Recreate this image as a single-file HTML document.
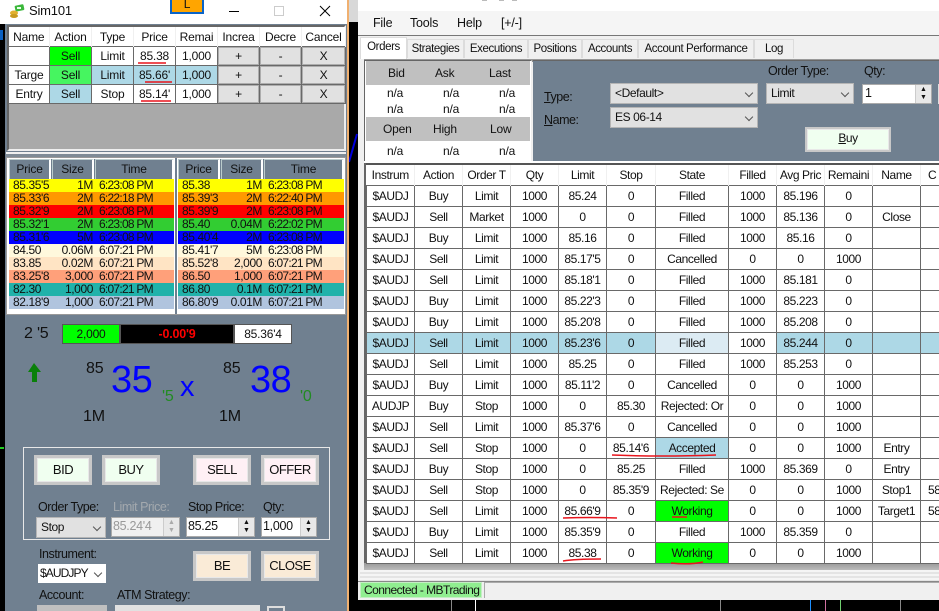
<!DOCTYPE html>
<html><head><meta charset="utf-8"><title>Sim101</title>
<style>
html,body{margin:0;padding:0;background:#000;}
#p{position:relative;width:939px;height:611px;overflow:hidden;background:#000;font:12px "Liberation Sans",sans-serif;color:#111;letter-spacing:-.2px;}
#p div{position:absolute;box-sizing:border-box;white-space:nowrap;}
table{position:absolute;border-collapse:collapse;table-layout:fixed;font:12px "Liberation Sans",sans-serif;letter-spacing:-.2px;color:#111;}
td{padding:0;text-align:center;overflow:hidden;white-space:nowrap;}
#top td{border:1px solid #696969;height:18px;background:#fff;}
#top tr:first-child td{border:0;border-right:1px solid #f0f0f0;height:19px;}
#top .b{background:#e1e1e1;box-shadow:inset 0 0 0 1px #adadad;border:1px solid #696969;}
.lb{background:#add8e6!important;}
.d{table-layout:fixed;}
.d td{height:13px;line-height:13px;font-size:12px;}
.d td:nth-child(1){text-align:left;padding-left:4px;letter-spacing:-.4px;}
.d td:nth-child(2){text-align:right;letter-spacing:-.4px;}
.d td:nth-child(3){text-align:left;padding-left:6px;letter-spacing:-.75px;}
.y td{background:#ff0;}.o td{background:#ff9900;}.r td{background:#f00;}.g td{background:#32cd32;}.u td{background:#00f;}
.c td{background:#fff8dc;}.q td{background:#ffe4c4;}.s td{background:#ffa07a;}.t td{background:#20b2aa;}.v td{background:#b0c4de;}
.h{background:#708090;border-top:1px solid #bcc;border-left:1px solid #bcc;border-right:2px solid #fff;text-align:center;line-height:18px;}
.btn{border:3px solid #c8c8c8;outline:0;text-align:center;line-height:24px;font-size:13px;letter-spacing:-.5px;box-shadow:inset 0 0 0 1px #e8e8e8;}
.gr{background:#f0fff0;}.pk{background:#fff0f5;}.an{background:#faebd7;}
.lab{font-size:12.5px;line-height:14px;letter-spacing:-.45px;}
.sel{background:#e1e1e1;border:1px solid #b5b5b5;line-height:19px;padding-left:4px;letter-spacing:-.4px;}
.inp{background:#fff;border:1px solid #aaa;line-height:17px;padding-left:1px;font-size:12.5px;letter-spacing:-.3px;}
.spin{right:0;top:0;bottom:0;width:16px;background:#e8e8e8;border-left:1px solid #ccc;font-size:7px;line-height:8px;text-align:center;letter-spacing:0;padding-top:1px;white-space:normal!important;}
.chev{right:5px;top:6px;width:6px;height:6px;border-right:1px solid #555;border-bottom:1px solid #555;transform:rotate(45deg) scale(1,1);}
.tab{top:39px;height:19px;background:#f0f0f0;border:1px solid #dcdcdc;border-bottom:0;line-height:18px;text-align:center;font-size:11.5px;letter-spacing:-.4px;}
#ord{letter-spacing:-.4px;}
#ord td{border:1px solid #696969;height:20px;background:#fff;}
#ord tr:first-child td{border:0;border-right:1px solid #f0f0f0;height:20px;}
#ord td:last-child{text-align:left;padding-left:7px;}
.w{background:#0f0!important;}
.big{color:#00f;font-size:38px;line-height:40px;letter-spacing:-.5px;}
.sm{font-size:16px;line-height:18px;}
.gn{color:#228b22;font-size:16px;line-height:18px;}
</style></head><body>
<div id="p">
<!-- chart bits -->
<div style="left:0;top:0;width:6px;height:24px;background:#fff"></div>
<div style="left:0;top:30px;width:3px;height:10px;background:#0a5fc0"></div>
<div style="left:347px;top:0;width:2px;height:611px;background:#f0b070"></div>
<div style="left:349px;top:0;width:9px;height:22px;background:#d8d8d8"></div>
<div style="left:0;top:447px;width:4px;height:2px;background:#2c2"></div>
<svg style="position:absolute;left:349px;top:120px" width="10" height="50"><path d="M0 42L8 14" stroke="#00d" stroke-width="2" fill="none"/></svg>

<!-- left window -->
<div style="left:5px;top:0;width:342px;height:611px;background:#708090"></div>
<div style="left:5px;top:0;width:342px;height:24px;background:#fff"></div>
<svg style="position:absolute;left:9px;top:4px" width="16" height="14"><rect x="6" y="1" width="9" height="6" rx="1" fill="#3cb83c" transform="rotate(-12 10 4)"/><rect x="8" y="3" width="4" height="2" fill="#e8ffe8"/><ellipse cx="5" cy="9" rx="4" ry="2.5" fill="#e0b030"/><ellipse cx="5" cy="12" rx="4" ry="2" fill="#c89a20"/></svg>
<div style="left:29px;top:3px;font-size:13px;line-height:16px">Sim101</div>
<div style="left:170px;top:0;width:34px;height:14px;background:#ffa500;border:2px solid #0a64c8;border-top:0;text-align:center;line-height:8px;font-size:12px">L</div>
<div style="left:229px;top:11px;width:10px;height:1px;background:#000"></div>
<div style="left:274px;top:6px;width:10px;height:10px;border:1px solid #ccc"></div>
<svg style="position:absolute;left:319px;top:5px" width="12" height="12"><path d="M1 1L11 11M11 1L1 11" stroke="#000" stroke-width="1" fill="none"/></svg>

<!-- top grid -->
<div style="left:7px;top:25px;width:339px;height:126px;background:#a9a9a9;border:2px solid #666;border-bottom:2px solid #eee;border-right:2px solid #eee"></div>
<table id="top" style="left:8px;top:27px;width:337px">
<colgroup><col style="width:41px"><col style="width:42px"><col style="width:42px"><col style="width:42px"><col style="width:42px"><col style="width:42px"><col style="width:42px"><col style="width:44px"></colgroup>
<tr><td>Name</td><td>Action</td><td>Type</td><td>Price</td><td>Remai</td><td>Increa</td><td>Decre</td><td>Cancel</td></tr>
<tr><td></td><td style="background:#0f0">Sell</td><td>Limit</td><td>85.38</td><td>1,000</td><td class="b">+</td><td class="b">-</td><td class="b">X</td></tr>
<tr><td>Targe</td><td style="background:#46f560">Sell</td><td class="lb">Limit</td><td class="lb">85.66'</td><td class="lb">1,000</td><td class="b">+</td><td class="b">-</td><td class="b">X</td></tr>
<tr><td>Entry</td><td class="lb">Sell</td><td>Stop</td><td>85.14'</td><td>1,000</td><td class="b">+</td><td class="b">-</td><td class="b">X</td></tr>
</table>

<!-- depth -->
<div style="left:6px;top:152px;width:340px;height:2px;background:#f0f0f0"></div>
<div style="left:6px;top:154px;width:340px;height:4px;background:#7f8b96"></div>
<div style="left:6px;top:157px;width:340px;height:158px;background:#fff;border:1px solid #999"></div>
<div style="left:9px;top:159px;width:165px;height:20px;background:#708090"></div>
<div style="left:178px;top:159px;width:166px;height:20px;background:#708090"></div>
<div class="h" style="left:9px;top:159px;width:42px;height:20px">Price</div>
<div class="h" style="left:52px;top:159px;width:42px;height:20px">Size</div>
<div class="h" style="left:95px;top:159px;width:79px;height:20px">Time</div>
<div class="h" style="left:178px;top:159px;width:42px;height:20px">Price</div>
<div class="h" style="left:221px;top:159px;width:42px;height:20px">Size</div>
<div class="h" style="left:264px;top:159px;width:80px;height:20px">Time</div>
<table class="d" style="left:9px;top:179px;width:165px">
<colgroup><col style="width:45px"><col style="width:39px"><col style="width:81px"></colgroup>
<tr class="y"><td>85.35'5</td><td>1M</td><td>6:23:08 PM</td></tr>
<tr class="o"><td>85.33'6</td><td>2M</td><td>6:22:18 PM</td></tr>
<tr class="r"><td>85.32'9</td><td>2M</td><td>6:23:08 PM</td></tr>
<tr class="g"><td>85.32'1</td><td>2M</td><td>6:23:08 PM</td></tr>
<tr class="u"><td>85.31'6</td><td>5M</td><td>6:23:08 PM</td></tr>
<tr class="c"><td>84.50</td><td>0.06M</td><td>6:07:21 PM</td></tr>
<tr class="q"><td>83.85</td><td>0.02M</td><td>6:07:21 PM</td></tr>
<tr class="s"><td>83.25'8</td><td>3,000</td><td>6:07:21 PM</td></tr>
<tr class="t"><td>82.30</td><td>1,000</td><td>6:07:21 PM</td></tr>
<tr class="v"><td>82.18'9</td><td>1,000</td><td>6:07:21 PM</td></tr>
</table>
<table class="d" style="left:178px;top:179px;width:166px">
<colgroup><col style="width:45px"><col style="width:39px"><col style="width:82px"></colgroup>
<tr class="y"><td>85.38</td><td>1M</td><td>6:23:08 PM</td></tr>
<tr class="o"><td>85.39'3</td><td>2M</td><td>6:22:40 PM</td></tr>
<tr class="r"><td>85.39'9</td><td>2M</td><td>6:23:08 PM</td></tr>
<tr class="g"><td>85.40</td><td>0.04M</td><td>6:22:02 PM</td></tr>
<tr class="u"><td>85.40'4</td><td>2M</td><td>6:23:08 PM</td></tr>
<tr class="c"><td>85.41'7</td><td>5M</td><td>6:23:08 PM</td></tr>
<tr class="q"><td>85.52'8</td><td>2,000</td><td>6:07:21 PM</td></tr>
<tr class="s"><td>86.50</td><td>1,000</td><td>6:07:21 PM</td></tr>
<tr class="t"><td>86.80</td><td>0.1M</td><td>6:07:21 PM</td></tr>
<tr class="v"><td>86.80'9</td><td>0.01M</td><td>6:07:21 PM</td></tr>
</table>
<div style="left:175px;top:158px;width:2px;height:156px;background:#708090"></div>

<!-- quote -->
<div class="sm" style="left:24px;top:325px">2 '5</div>
<div style="left:62px;top:324px;width:230px;height:20px;background:#555"></div>
<div style="left:63px;top:325px;width:56px;height:18px;background:#0f0;text-align:center;line-height:18px">2,000</div>
<div style="left:121px;top:325px;width:112px;height:18px;background:#000;color:#f00;text-align:center;line-height:18px;font-weight:bold;font-size:12.5px">-0.00'9</div>
<div style="left:235px;top:325px;width:56px;height:18px;background:#fff;text-align:center;line-height:18px">85.36'4</div>
<svg style="position:absolute;left:27px;top:361px" width="16" height="22"><path d="M7 2L14 11H10V21H5V11H1Z" fill="#0a800a"/></svg>
<div class="sm" style="left:86px;top:360px">85</div>
<div class="big" style="left:111px;top:360px">35</div>
<div class="gn" style="left:162px;top:388px">'5</div>
<div style="left:180px;top:372px;color:#00f;font-size:29px;line-height:30px">x</div>
<div class="sm" style="left:223px;top:360px">85</div>
<div class="big" style="left:250px;top:360px">38</div>
<div class="gn" style="left:300px;top:388px">'0</div>
<div class="sm" style="left:83px;top:408px">1M</div>
<div class="sm" style="left:219px;top:408px">1M</div>

<!-- order box -->
<div style="left:23px;top:447px;width:307px;height:93px;border:1px solid #e8e8e8"></div>
<div class="btn gr" style="left:34px;top:455px;width:58px;height:30px">BID</div>
<div class="btn gr" style="left:102px;top:455px;width:58px;height:30px">BUY</div>
<div class="btn pk" style="left:193px;top:455px;width:58px;height:30px">SELL</div>
<div class="btn pk" style="left:261px;top:455px;width:58px;height:30px">OFFER</div>
<div class="lab" style="left:38px;top:500px">Order Type:</div>
<div class="lab" style="left:113px;top:500px;color:#a4a9ae">Limit Price:</div>
<div class="lab" style="left:188px;top:500px">Stop Price:</div>
<div class="lab" style="left:263px;top:500px">Qty:</div>
<div class="sel" style="left:36px;top:517px;width:70px;height:21px">Stop<div class="chev"></div></div>
<div class="inp" style="left:111px;top:517px;width:69px;height:20px;background:#f0f0f0;color:#999">85.24'4<div class="spin" style="color:#aaa">▲<br>▼</div></div>
<div class="inp" style="left:186px;top:517px;width:69px;height:20px">85.25<div class="spin">▲<br>▼</div></div>
<div class="inp" style="left:261px;top:517px;width:56px;height:20px">1,000<div class="spin">▲<br>▼</div></div>
<div class="lab" style="left:39px;top:547px">Instrument:</div>
<div class="sel" style="left:38px;top:564px;width:68px;height:19px;background:#fff;border:0;line-height:18px;font-size:12px;letter-spacing:-.9px;padding-left:2px">$AUDJPY<div class="chev"></div></div>
<div class="btn an" style="left:193px;top:551px;width:58px;height:30px">BE</div>
<div class="btn an" style="left:261px;top:551px;width:58px;height:30px">CLOSE</div>
<div class="lab" style="left:39px;top:588px">Account:</div>
<div class="lab" style="left:117px;top:588px">ATM Strategy:</div>
<div style="left:37px;top:605px;width:70px;height:6px;background:#c0c0c0"></div>
<div style="left:115px;top:605px;width:145px;height:6px;background:#e1e1e1"></div>
<div style="left:267px;top:606px;width:18px;height:5px;border:2px solid #ddd;border-bottom:0"></div>

<!-- right window -->
<div style="left:358px;top:0;width:581px;height:600px;background:#f0f0f0"></div>
<div style="left:358px;top:0;width:581px;height:11px;background:#fff"></div>
<div style="left:482px;top:0;width:5px;height:1px;background:#bbb"></div>
<div style="left:499px;top:0;width:5px;height:1px;background:#bbb"></div>
<div style="left:512px;top:0;width:5px;height:1px;background:#bbb"></div>
<div style="left:358px;top:11px;width:581px;height:24px;background:#f5f5f5"></div>
<div style="left:373px;top:15px;font-size:12.5px;line-height:16px">File</div>
<div style="left:410px;top:15px;font-size:12.5px;line-height:16px">Tools</div>
<div style="left:457px;top:15px;font-size:12.5px;line-height:16px">Help</div>
<div style="left:501px;top:15px;font-size:12.5px;line-height:16px">[+/-]</div>
<div style="left:358px;top:35px;width:581px;height:1px;background:#777"></div>
<div class="tab" style="left:407px;width:57px">Strategies</div>
<div class="tab" style="left:464px;width:64px">Executions</div>
<div class="tab" style="left:528px;width:54px">Positions</div>
<div class="tab" style="left:582px;width:56px">Accounts</div>
<div class="tab" style="left:638px;width:116px">Account Performance</div>
<div class="tab" style="left:754px;width:40px">Log</div>
<div style="left:360px;top:37px;width:47px;height:22px;background:#fff;border:1px solid #dcdcdc;border-bottom:0;text-align:center;line-height:18px;font-size:11.5px;letter-spacing:-.4px">Orders</div>

<!-- quotes panel -->
<div style="left:364px;top:59px;width:575px;height:3px;background:#8a8a8a;border-top:1px solid #999"></div>
<div style="left:364px;top:60px;width:168px;height:102px;background:#fff;border:1px solid #666;border-right-color:#eee"></div>
<div style="left:366px;top:61px;width:164px;height:24px;background:#c0c0c0"></div>
<div style="left:366px;top:117px;width:164px;height:24px;background:#c0c0c0"></div>
<div style="left:388px;top:65px;line-height:16px">Bid</div><div style="left:435px;top:65px;line-height:16px">Ask</div><div style="left:489px;top:65px;line-height:16px">Last</div>
<div style="left:387px;top:85px;line-height:16px">n/a</div><div style="left:443px;top:85px;line-height:16px">n/a</div><div style="left:499px;top:85px;line-height:16px">n/a</div>
<div style="left:387px;top:101px;line-height:16px">n/a</div><div style="left:443px;top:101px;line-height:16px">n/a</div><div style="left:499px;top:101px;line-height:16px">n/a</div>
<div style="left:383px;top:121px;line-height:16px">Open</div><div style="left:433px;top:121px;line-height:16px">High</div><div style="left:490px;top:121px;line-height:16px">Low</div>
<div style="left:387px;top:143px;line-height:16px">n/a</div><div style="left:443px;top:143px;line-height:16px">n/a</div><div style="left:499px;top:143px;line-height:16px">n/a</div>

<!-- form -->
<div style="left:533px;top:60px;width:406px;height:102px;background:#708090;border-top:1px solid #666"></div>
<div class="lab" style="left:544px;top:90px"><u>T</u>ype:</div>
<div class="lab" style="left:544px;top:113px"><u>N</u>ame:</div>
<div class="sel" style="left:610px;top:83px;width:148px;height:21px">&lt;Default&gt;<div class="chev"></div></div>
<div class="sel" style="left:610px;top:107px;width:148px;height:21px">ES 06-14<div class="chev"></div></div>
<div class="lab" style="left:768px;top:64px">Order Type:</div>
<div class="lab" style="left:864px;top:64px">Qty:</div>
<div class="sel" style="left:766px;top:83px;width:88px;height:21px">Limit<div class="chev"></div></div>
<div class="inp" style="left:862px;top:84px;width:70px;height:20px;padding-left:2px">1<div class="spin">▲<br>▼</div></div>
<div style="left:938px;top:84px;width:1px;height:20px;background:#ddd"></div>
<div class="btn gr" style="left:805px;top:127px;width:86px;height:25px;line-height:19px;font-size:12px;border-width:2px"><u>B</u>uy</div>
<div style="left:364px;top:161px;width:575px;height:2px;background:#fff"></div>

<!-- orders grid -->
<div style="left:364px;top:163px;width:575px;height:2px;background:#555"></div>
<div style="left:364px;top:163px;width:2px;height:406px;background:#666"></div>
<div style="left:366px;top:165px;width:573px;height:398px;background:#fff"></div>
<div style="left:364px;top:563px;width:575px;height:7px;background:linear-gradient(#999,#bbb)"></div>
<div style="left:360px;top:570px;width:579px;height:12px;background:repeating-linear-gradient(#f5f5f5 0,#f5f5f5 2px,#e4e4e4 2px,#e4e4e4 4px)"></div>
<div style="left:358px;top:581px;width:581px;height:1px;background:#888"></div>
<table id="ord" style="left:366px;top:165px;width:581px">
<colgroup><col style="width:48px"><col style="width:48px"><col style="width:48px"><col style="width:48px"><col style="width:48px"><col style="width:49px"><col style="width:73px"><col style="width:48px"><col style="width:48px"><col style="width:48px"><col style="width:48px"><col style="width:27px"></colgroup>
<tr><td>Instrum</td><td>Action</td><td>Order T</td><td>Qty</td><td>Limit</td><td>Stop</td><td>State</td><td>Filled</td><td>Avg Pric</td><td>Remaini</td><td>Name</td><td>C</td></tr>
<tr><td>$AUDJ</td><td>Buy</td><td>Limit</td><td>1000</td><td>85.24</td><td>0</td><td>Filled</td><td>1000</td><td>85.196</td><td>0</td><td></td><td></td></tr>
<tr><td>$AUDJ</td><td>Sell</td><td>Market</td><td>1000</td><td>0</td><td>0</td><td>Filled</td><td>1000</td><td>85.136</td><td>0</td><td>Close</td><td></td></tr>
<tr><td>$AUDJ</td><td>Buy</td><td>Limit</td><td>1000</td><td>85.16</td><td>0</td><td>Filled</td><td>1000</td><td>85.16</td><td>0</td><td></td><td></td></tr>
<tr><td>$AUDJ</td><td>Sell</td><td>Limit</td><td>1000</td><td>85.17'5</td><td>0</td><td>Cancelled</td><td>0</td><td>0</td><td>1000</td><td></td><td></td></tr>
<tr><td>$AUDJ</td><td>Sell</td><td>Limit</td><td>1000</td><td>85.18'1</td><td>0</td><td>Filled</td><td>1000</td><td>85.181</td><td>0</td><td></td><td></td></tr>
<tr><td>$AUDJ</td><td>Buy</td><td>Limit</td><td>1000</td><td>85.22'3</td><td>0</td><td>Filled</td><td>1000</td><td>85.223</td><td>0</td><td></td><td></td></tr>
<tr><td>$AUDJ</td><td>Buy</td><td>Limit</td><td>1000</td><td>85.20'8</td><td>0</td><td>Filled</td><td>1000</td><td>85.208</td><td>0</td><td></td><td></td></tr>
<tr><td class="lb">$AUDJ</td><td class="lb">Sell</td><td class="lb">Limit</td><td class="lb">1000</td><td class="lb">85.23'6</td><td class="lb">0</td><td style="background:#dcebf3">Filled</td><td>1000</td><td class="lb">85.244</td><td class="lb">0</td><td class="lb"></td><td class="lb"></td></tr>
<tr><td>$AUDJ</td><td>Sell</td><td>Limit</td><td>1000</td><td>85.25</td><td>0</td><td>Filled</td><td>1000</td><td>85.253</td><td>0</td><td></td><td></td></tr>
<tr><td>$AUDJ</td><td>Buy</td><td>Limit</td><td>1000</td><td>85.11'2</td><td>0</td><td>Cancelled</td><td>0</td><td>0</td><td>1000</td><td></td><td></td></tr>
<tr><td>AUDJP</td><td>Buy</td><td>Stop</td><td>1000</td><td>0</td><td>85.30</td><td>Rejected: Or</td><td>0</td><td>0</td><td>1000</td><td></td><td></td></tr>
<tr><td>$AUDJ</td><td>Sell</td><td>Limit</td><td>1000</td><td>85.37'6</td><td>0</td><td>Cancelled</td><td>0</td><td>0</td><td>1000</td><td></td><td></td></tr>
<tr><td>$AUDJ</td><td>Sell</td><td>Stop</td><td>1000</td><td>0</td><td>85.14'6</td><td class="lb">Accepted</td><td>0</td><td>0</td><td>1000</td><td>Entry</td><td></td></tr>
<tr><td>$AUDJ</td><td>Buy</td><td>Stop</td><td>1000</td><td>0</td><td>85.25</td><td>Filled</td><td>1000</td><td>85.369</td><td>0</td><td>Entry</td><td></td></tr>
<tr><td>$AUDJ</td><td>Sell</td><td>Stop</td><td>1000</td><td>0</td><td>85.35'9</td><td>Rejected: Se</td><td>0</td><td>0</td><td>1000</td><td>Stop1</td><td>58</td></tr>
<tr><td>$AUDJ</td><td>Sell</td><td>Limit</td><td>1000</td><td>85.66'9</td><td>0</td><td class="w">Working</td><td>0</td><td>0</td><td>1000</td><td>Target1</td><td>58</td></tr>
<tr><td>$AUDJ</td><td>Buy</td><td>Limit</td><td>1000</td><td>85.35'9</td><td>0</td><td>Filled</td><td>1000</td><td>85.359</td><td>0</td><td></td><td></td></tr>
<tr><td>$AUDJ</td><td>Sell</td><td>Limit</td><td>1000</td><td>85.38</td><td>0</td><td class="w">Working</td><td>0</td><td>0</td><td>1000</td><td></td><td></td></tr>
</table>

<!-- status -->
<div style="left:358px;top:582px;width:581px;height:18px;background:#f0f0f0"></div>
<div style="left:360px;top:582px;width:122px;height:16px;background:#90ee90;border:1px solid #c4eec4;line-height:14px;padding-left:3px;letter-spacing:-.55px">Connected - MBTrading</div>
<div style="left:484px;top:582px;width:455px;height:16px;border-left:1px solid #aaa;border-top:1px solid #aaa;background:#f0f0f0"></div>
<div style="left:451px;top:600px;width:1px;height:11px;background:#888"></div>
<div style="left:475px;top:600px;width:1px;height:11px;background:#fff"></div>
<div style="left:720px;top:600px;width:1px;height:11px;background:#888"></div>
<div style="left:810px;top:600px;width:1px;height:11px;background:#1e90ff"></div>
<div style="left:825px;top:600px;width:1px;height:11px;background:#d070a0"></div>
<div style="left:840px;top:600px;width:1px;height:11px;background:#70d070"></div>
<div style="left:900px;top:600px;width:1px;height:11px;background:#888"></div>

<!-- red annotations -->
<svg style="position:absolute;left:0;top:0" width="939" height="611" fill="none" stroke="#e8141c" stroke-width="1.5">
<path d="M138 63H166"/><path d="M145 82H172"/><path d="M141 101H171"/>
<path d="M612 455Q660 457 716 455"/><path d="M563 518Q590 517 617 518"/><path d="M563 561Q575 559 601 559"/>
<path d="M672 517H687"/><path d="M671 563Q690 565 703 562"/>
</svg>
</div>
</body></html>
